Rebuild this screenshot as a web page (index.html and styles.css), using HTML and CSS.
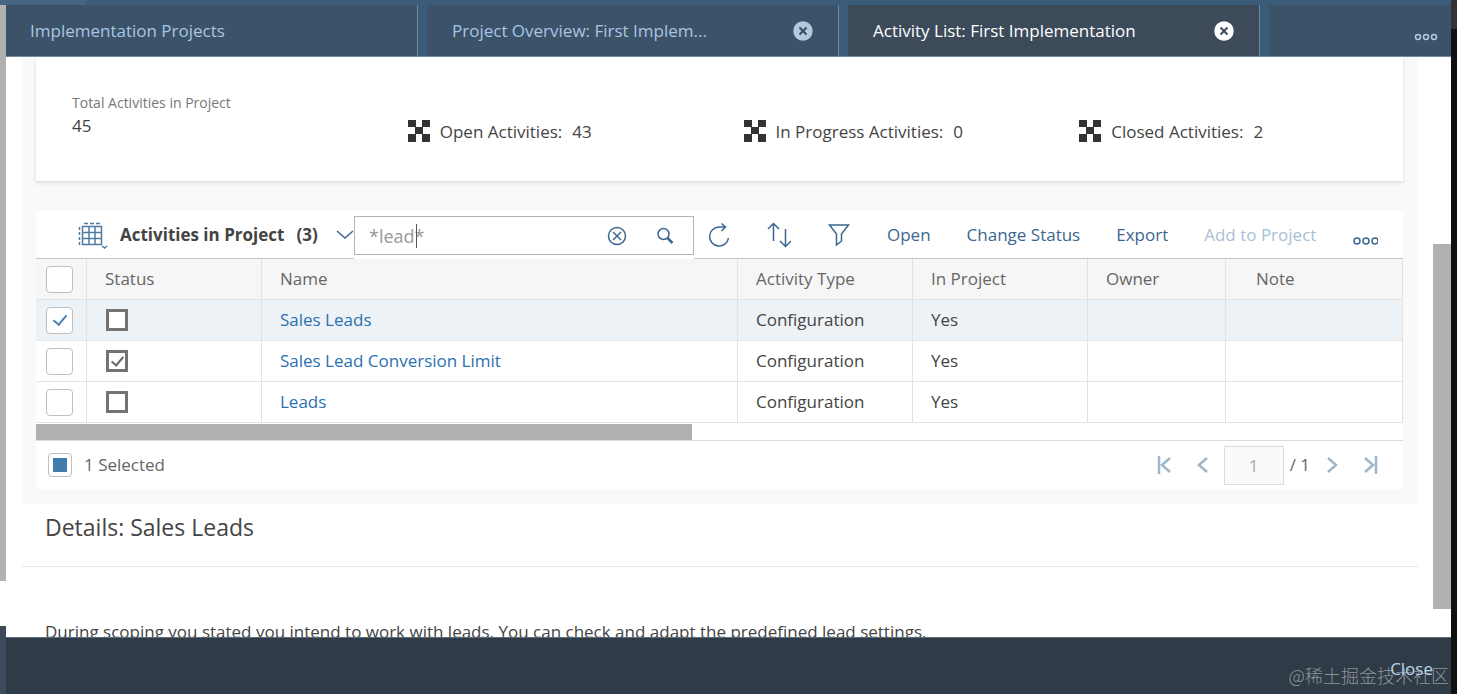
FILE: index.html
```html
<!DOCTYPE html>
<html lang="en">
  <head>
    <meta charset="UTF-8" />
    <meta name="viewport" content="width=device-width, initial-scale=1.0" />
    <title>Activity List: First Implementation</title>
    <link rel="stylesheet" href="styles.css">
  </head>
  <body>
    <div class="edge edge-left"></div>

    <div class="app">
      <nav class="tabs">
        <div class="tab">
          <a href="#projects">Implementation Projects</a>
        </div>
        <div class="tab">
          <a href="#overview">Project Overview: First Implem...</a>
          <button class="tab-close" aria-label="Close tab">
            <svg viewBox="0 0 20 20"><circle cx="10" cy="10" r="9" /><path d="M6.5 6.5l7 7M13.500 6.500l-7 7" /></svg>
          </button>
        </div>
        <div class="tab active">
          <a href="#activities">Activity List: First Implementation</a>
          <button class="tab-close" aria-label="Close tab">
            <svg viewBox="0 0 20 20"><circle cx="10" cy="10" r="9" /><path d="M6.5 6.5l7 7M13.500 6.500l-7 7" /></svg>
          </button>
        </div>
        <div class="tab rest">
          <button class="more" aria-label="More tabs">
            <svg viewBox="0 0 26 10"><circle cx="5" cy="5" r="2.500" /><circle cx="13" cy="5" r="2.500" /><circle cx="21" cy="5" r="2.500" /></svg>
          </button>
        </div>
      </nav>

      <main class="content">
        <div class="page">
          <div class="overview">
            <section class="card">
              <div class="total">
                <p class="label">Total Activities in Project</p>
                <p>45</p>
              </div>
              <p class="stat">
                <svg viewBox="0 0 22 22"><path d="M0 0h8v7H0zM14 0h8v7h-8zM7 7h8v7H7zM0 14h8v8H0zM14 14h8v8h-8z" /></svg>
                <span>Open Activities:</span><span>43</span>
              </p>
              <p class="stat">
                <svg viewBox="0 0 22 22"><path d="M0 0h8v7H0zM14 0h8v7h-8zM7 7h8v7H7zM0 14h8v8H0zM14 14h8v8h-8z" /></svg>
                <span>In Progress Activities:</span><span>0</span>
              </p>
              <p class="stat">
                <svg viewBox="0 0 22 22"><path d="M0 0h8v7H0zM14 0h8v7h-8zM7 7h8v7H7zM0 14h8v8H0zM14 14h8v8h-8z" /></svg>
                <span>Closed Activities:</span><span>2</span>
              </p>
            </section>

            <section class="panel">
              <div class="toolbar">
                <div class="heading">
                  <button class="view" aria-label="Table view">
                    <svg viewBox="0 0 30 28"><path d="M4.500 5.500h19v18h-19zM4.500 11.500h19M4.500 17.500h19M11 5.500v18M17 5.500v18" /><path d="M6 2.500h4M12 2.500h4M18 2.500h4M1.500 6v3M1.500 11v3M1.500 16v3M1.500 21v3" /><path d="M24 25l2.500 2 2.500-2" /></svg>
                  </button>
                  <h2>Activities in Project</h2>
                  <span class="count">(3)</span>
                  <button class="variant" aria-label="Choose variant">
                    <svg viewBox="0 0 18 10"><path d="M1 1l8 7 8-7" /></svg>
                  </button>
                </div>
                <div class="search">
                  <div class="field">
                    <input type="text" value="*lead*" aria-label="Search" />
                    <i class="caret"></i>
                    <button aria-label="Clear">
                      <svg viewBox="0 0 20 20"><circle cx="10" cy="10" r="8.500" /><path d="M6 6l8 8M14 6l-8 8" /></svg>
                    </button>
                    <button aria-label="Search">
                      <svg viewBox="0 0 20 20"><circle cx="8.500" cy="8" r="5.500" /><path d="M12.500 12l5 5" stroke-width="2.500" /></svg>
                    </button>
                  </div>
                </div>
                <div class="actions">
                  <button aria-label="Refresh">
                    <svg viewBox="0 0 24 26"><path d="M21.500 16A9.500 9.500 0 1 1 12 5h6M14.500 1.500L18.500 5l-4 4" /></svg>
                  </button>
                  <button aria-label="Sort">
                    <svg viewBox="0 0 24 26"><path d="M6.500 19V2M1 7l5.500-5.500L12 7M18.500 7v17M13 19l5.500 5.500L24 19" /></svg>
                  </button>
                  <button aria-label="Filter">
                    <svg viewBox="0 0 24 26"><path d="M2.500 3h19l-7 9v7l-5 4V12z" /></svg>
                  </button>
                  <button>Open</button>
                  <button>Change Status</button>
                  <button>Export</button>
                  <button disabled>Add to Project</button>
                  <button class="more" aria-label="More actions">
                    <svg viewBox="0 0 26 10"><circle cx="5" cy="5" r="3" /><circle cx="14" cy="5" r="3" /><circle cx="23" cy="5" r="3" /></svg>
                  </button>
                </div>
              </div>

              <table>
                <colgroup>
                  <col class="col-select" />
                  <col class="col-status" />
                  <col />
                  <col class="col-type" />
                  <col class="col-project" />
                  <col class="col-owner" />
                  <col class="col-note" />
                </colgroup>
                <thead>
                  <tr>
                    <th><input type="checkbox" class="pick" aria-label="Select all" /></th>
                    <th>Status</th>
                    <th>Name</th>
                    <th>Activity Type</th>
                    <th>In Project</th>
                    <th>Owner</th>
                    <th class="note">Note</th>
                  </tr>
                </thead>
                <tbody>
                  <tr class="selected">
                    <td><input type="checkbox" class="pick" aria-label="Select Sales Leads" checked /></td>
                    <td><input type="checkbox" class="status" aria-label="Sales Leads done" /></td>
                    <td><a href="#sales-leads">Sales Leads</a></td>
                    <td>Configuration</td>
                    <td>Yes</td>
                    <td></td>
                    <td></td>
                  </tr>
                  <tr>
                    <td><input type="checkbox" class="pick" aria-label="Select Sales Lead Conversion Limit" /></td>
                    <td><input type="checkbox" class="status" aria-label="Sales Lead Conversion Limit done" checked /></td>
                    <td><a href="#conversion-limit">Sales Lead Conversion Limit</a></td>
                    <td>Configuration</td>
                    <td>Yes</td>
                    <td></td>
                    <td></td>
                  </tr>
                  <tr>
                    <td><input type="checkbox" class="pick" aria-label="Select Leads" /></td>
                    <td><input type="checkbox" class="status" aria-label="Leads done" /></td>
                    <td><a href="#leads">Leads</a></td>
                    <td>Configuration</td>
                    <td>Yes</td>
                    <td></td>
                    <td></td>
                  </tr>
                </tbody>
              </table>
              <div class="hscroll"><div class="hthumb"></div></div>

              <div class="pager">
                <label class="selection"><input type="checkbox" class="partial" />1 Selected</label>
                <div class="pages">
                  <button aria-label="First page"><svg viewBox="0 0 18 18"><path d="M3 0v18M14 2L6 9l8 7" /></svg></button>
                  <button aria-label="Previous page"><svg viewBox="0 0 18 18"><path d="M13 2L5 9l8 7" /></svg></button>
                  <input type="text" value="1" aria-label="Page" disabled />
                  <span>/ 1</span>
                  <button aria-label="Next page"><svg viewBox="0 0 18 18"><path d="M5 2l8 7-8 7" /></svg></button>
                  <button aria-label="Last page"><svg viewBox="0 0 18 18"><path d="M4 2l8 7-8 7M15 0v18" /></svg></button>
                </div>
              </div>
            </section>
          </div>

          <section class="details">
            <h1>Details: Sales Leads</h1>
            <p>During scoping you stated you intend to work with leads. You can check and adapt the predefined lead settings.</p>
          </section>
        </div>
        <div class="vscroll"><div class="vthumb"></div></div>
      </main>

      <footer>
        <button class="close">Close</button>
        <span class="watermark">@稀土掘金技术社区</span>
      </footer>
    </div>

    <div class="edge edge-right"></div>
  </body>
</html>
```

FILE: styles.css
```css
* {
  box-sizing: border-box;
}

body {
  display: grid;
  grid-template-columns: 6px 1fr 6px;
  height: 100vh;
  margin: 0;
  overflow: hidden;
  font-family: "Open Sans", "Noto Sans CJK SC", sans-serif;
  font-size: 17px;
  line-height: 24px;
  color: #444;
  background-color: #fff;
}

h1,
h2,
p {
  margin: 0;
}

a {
  color: #2a71b0;
  text-decoration: none;
}

button {
  padding: 0;
  border: 0;
  background: none;
  font: inherit;
  color: #3c6690;
  white-space: nowrap;
}

svg {
  display: block;
  fill: none;
  stroke: currentColor;
  stroke-width: 1.5;
}

/* window edges */
.edge-left {
  display: flex;
  flex-direction: column;
  border-top: 5px solid #456580;
}

.edge-left::before {
  content: "";
  height: 576px;
  background-color: #b1b1b1;
}

.edge-left::after {
  content: "";
  height: 68px;
  margin-top: auto;
  background-color: #3c4b5b;
}

.edge-right {
  border-top: 29px solid #333;
  background-color: #101010;
}

.app {
  display: flex;
  flex-direction: column;
  min-width: 0;
  height: 100vh;
}

/* tabs */
.tabs {
  display: grid;
  grid-template-columns: repeat(3, minmax(0, 412px)) 1fr;
  gap: 9px;
  flex: none;
  height: 57px;
  padding-top: 5px;
  border-bottom: 1px solid #75899d;
  background: linear-gradient(125deg, #456580 66px, #3a5c79 68px);
}

.tab {
  display: flex;
  align-items: center;
  justify-content: space-between;
  padding: 0 25px;
  border-right: 1px solid #6f889b;
  background-color: #3c5269;
}

.tab:first-child {
  padding-left: 24px;
}

.tab a {
  color: #a6c6e2;
  white-space: nowrap;
}

.tab.active {
  background-color: #3c4a5a;
}

.tab.active a,
.tab.active button {
  color: #fff;
}

.tab.rest {
  justify-content: flex-end;
  padding-right: 12px;
  border-right: 0;
}

.tab button {
  color: #b0cae0;
}

.tab-close svg {
  width: 20px;
  height: 20px;
}

.tab-close circle {
  fill: currentColor;
}

.tab-close path {
  stroke: #3c4a5a;
  stroke-width: 2;
}

.more svg {
  width: 26px;
  height: 10px;
  margin-top: 13px;
}

/* content */
.content {
  display: flex;
  flex: 1;
  min-height: 0;
  overflow: hidden;
  padding-left: 16px;
}

.page {
  flex: 1;
  min-width: 0;
  margin-right: 15px;
}

.overview {
  padding: 0 15px 15px 14px;
  background-color: #f9f9f9;
}

.card {
  display: grid;
  grid-template-columns: repeat(4, 1fr);
  gap: 12px;
  height: 124px;
  padding: 34px 0 0 36px;
  background-color: #fff;
  box-shadow: 0 2px 4px rgba(0, 0, 0, 0.12);
}

.label {
  font-size: 14px;
  line-height: 23px;
  color: #777;
}

.stat {
  display: flex;
  gap: 10px;
  padding-top: 29px;
}

.stat svg {
  width: 22px;
  height: 22px;
  fill: #333;
  stroke: none;
}

.panel {
  margin-top: 30px;
  background-color: #fff;
}

/* toolbar */
.toolbar {
  display: flex;
  height: 48px;
  border-bottom: 1px solid #c4c4c4;
}

.heading {
  display: flex;
  align-items: center;
  flex: 0 0 318px;
  padding-left: 42px;
}

.view svg {
  width: 30px;
  height: 28px;
  color: #4f7ba3;
}

.heading h2 {
  margin: 0 12px;
  font-size: 17px;
  font-weight: 700;
  white-space: nowrap;
}

.count {
  font-weight: 700;
}

.variant {
  margin-left: auto;
}

.variant svg {
  width: 18px;
  height: 10px;
}

.search {
  flex: 0 1 340px;
  min-width: 0;
  margin-bottom: -1px;
  padding: 5px 0;
  background-color: #fff;
}

.field {
  position: relative;
  display: flex;
  align-items: center;
  gap: 28px;
  height: 39px;
  padding: 0 18px 0 14px;
  border: 1px solid #b4b4b4;
}

.field input {
  flex: 1;
  min-width: 0;
  padding: 0;
  border: 0;
  outline: 0;
  font: inherit;
  font-size: 18px;
  color: #999;
}

.field svg {
  width: 20px;
  height: 20px;
}

.caret {
  position: absolute;
  left: 61px;
  top: 7px;
  width: 1px;
  height: 24px;
  background-color: #555;
}

.actions {
  display: flex;
  align-items: center;
  gap: 36px;
  padding-left: 13px;
}

.actions svg {
  width: 24px;
  height: 26px;
}

.actions .more svg {
  width: 26px;
  height: 10px;
}

.actions button:disabled {
  color: #a9bfd4;
}

/* table */
table {
  width: 100%;
  border-collapse: separate;
  border-spacing: 0;
  table-layout: fixed;
}

.col-select {
  width: 51px;
}

.col-status,
.col-type,
.col-project {
  width: 175px;
}

.col-owner {
  width: 138px;
}

.col-note {
  width: 177px;
}

th,
td {
  height: 41px;
  padding: 0 0 0 18px;
  border-right: 1px solid #e2e2e2;
  border-bottom: 1px solid #e4e4e4;
  text-align: left;
  font-weight: 400;
}

th {
  background-color: #f6f6f6;
  color: #666;
}

th:first-child,
td:first-child {
  padding-left: 10px;
}

th.note {
  padding-left: 30px;
}

.selected td {
  background-color: #edf2f6;
}

input[type="checkbox"] {
  display: grid;
  place-content: center;
  appearance: none;
  margin: 0;
  background-color: #fff;
}

.pick {
  width: 27px;
  height: 27px;
  border: 1px solid #bfbfbf;
  border-radius: 4px;
}

input.status {
  width: 22px;
  height: 22px;
  margin-left: 1px;
  border: 3px solid #737373;
}

.pick:checked::before,
.status:checked::before {
  content: "";
  width: 6px;
  height: 11px;
  margin-bottom: 3px;
  border: solid #4a82b4;
  border-width: 0 2px 2px 0;
  transform: rotate(40deg);
}

.status:checked::before {
  width: 5px;
  height: 10px;
  border-color: #666;
}

.hscroll {
  padding-top: 1px;
  border-bottom: 1px solid #dcdcdc;
}

.hthumb {
  width: 48%;
  height: 16px;
  background-color: #b1b1b1;
}

/* pager */
.pager {
  display: flex;
  align-items: center;
  justify-content: space-between;
  height: 48px;
  padding: 0 24px 0 12px;
}

.selection {
  display: flex;
  align-items: center;
  gap: 12px;
  color: #666;
}

.partial {
  width: 24px;
  height: 24px;
  border: 1px solid #bfbfbf;
  border-radius: 4px;
}

.partial::before {
  content: "";
  width: 14px;
  height: 14px;
  background-color: #427cac;
}

.pages {
  display: flex;
  align-items: center;
  gap: 20px;
  color: #666;
}

.pages button {
  color: #9fb6cb;
}

.pages svg {
  width: 18px;
  height: 18px;
  stroke-width: 2.5;
}

.pages input {
  width: 60px;
  height: 39px;
  margin: 0 -14px 0 -8px;
  border: 1px solid #dcdcdc;
  background-color: #fafafa;
  text-align: center;
  font: inherit;
  color: #aaa;
}

.pages span {
  margin-right: -7px;
}

/* details */
.details h1 {
  height: 63px;
  padding: 7px 23px;
  border-bottom: 1px solid #e6e6e6;
  font-size: 23px;
  font-weight: 400;
  line-height: 32px;
}

.details p {
  padding: 53px 23px 0;
  white-space: nowrap;
}

.vscroll {
  flex: none;
  width: 18px;
  padding-top: 187px;
}

.vthumb {
  height: 365px;
  background-color: #b1b1b1;
}

/* footer */
footer {
  position: relative;
  display: flex;
  justify-content: flex-end;
  flex: none;
  height: 57px;
  padding: 19px 18px 0 0;
  border-top: 1px solid #5a6b79;
  background-color: #2f3b47;
}

footer .close {
  height: 24px;
  color: #b9d4ee;
}

.watermark {
  position: absolute;
  right: 2px;
  bottom: 7px;
  font-family: "Noto Sans CJK SC", sans-serif;
  font-size: 18px;
  font-weight: 300;
  color: rgba(200, 200, 200, 0.65);
}
```
